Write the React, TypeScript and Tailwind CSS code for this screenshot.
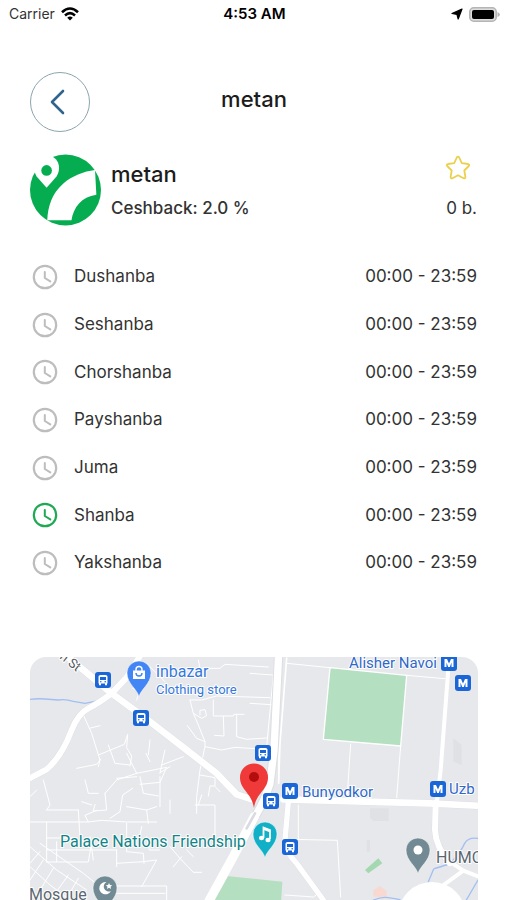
import type { ReactNode } from "react";

const days = [
  { name: "Dushanba", hours: "00:00 - 23:59", today: false },
  { name: "Seshanba", hours: "00:00 - 23:59", today: false },
  { name: "Chorshanba", hours: "00:00 - 23:59", today: false },
  { name: "Payshanba", hours: "00:00 - 23:59", today: false },
  { name: "Juma", hours: "00:00 - 23:59", today: false },
  { name: "Shanba", hours: "00:00 - 23:59", today: true },
  { name: "Yakshanba", hours: "00:00 - 23:59", today: false },
];

function StatusBar() {
  return (
    <div className="grid h-7 grid-cols-3 items-center pl-[9px] pr-[7px] text-black">
      <div className="flex items-center gap-[6px] text-sm">
        <span className="text-[#333]">Carrier</span>
        <svg width="18" height="14" viewBox="0 0 18 14" fill="none" stroke="#000" strokeWidth="2.6" aria-hidden="true">
          <path d="M1 5.2Q9-2.2 17 5.2" />
          <path d="M4 8.4Q9 4 14 8.4" />
          <path d="M9 13.6 6.2 10.7Q9 8.4 11.8 10.7Z" fill="#000" stroke="none" />
        </svg>
      </div>
      <div className="text-center text-[15px] font-semibold">4:53 AM</div>
      <div className="flex items-center justify-end gap-[6px]">
        <svg width="12" height="12" viewBox="0 0 12 12" aria-hidden="true">
          <path d="M11 1 7.2 11 6 6.500 1 5.500Z" fill="#000" stroke="#000" strokeWidth="1.200" strokeLinejoin="round" />
        </svg>
        <svg width="31" height="15" viewBox="0 0 31 15" aria-hidden="true">
          <rect x=".8" y=".8" width="26.4" height="13.4" rx="4" fill="#ddd" stroke="#b5b5b5" strokeWidth="1.6" />
          <rect x="3" y="3" width="22" height="9" rx="2" fill="#000" />
          <path d="M28.5 5q2.4 1 2.4 2.5t-2.4 2.5Z" fill="#b5b5b5" />
        </svg>
      </div>
    </div>
  );
}

function Logo() {
  return (
    <svg className="shrink-0" width="71" height="72" viewBox="0 0 214 216" role="img" aria-label="metan">
      <circle cx="107" cy="108" r="107" fill="#06ad50" />
      <path d="M52 199C54 156 67 118 99 90C126 66 162 52 196 48L200 122C155 128 131 160 125 199Z" fill="#fff" />
      <path d="M50 101 20 67C2 37 20 4 52 4C82 4 98 38 80 67Z" fill="#fff" />
      <circle cx="50" cy="49" r="16" fill="#06ad50" />
    </svg>
  );
}

function Clock({ active }: { active: boolean }) {
  return (
    <svg
      className={active ? "shrink-0 text-[#20a954]" : "shrink-0 text-[#bdbdbd]"}
      width="26"
      height="26"
      viewBox="0 0 26 26"
      fill="none"
      stroke="currentColor"
      strokeWidth="2.2"
      aria-hidden="true"
    >
      <circle cx="13" cy="13" r="11.200" />
      <path d="M12.800 8v6l5.500 3.400" strokeWidth="2" strokeLinecap="round" strokeLinejoin="round" />
    </svg>
  );
}

function Bus({ x, y }: { x: number; y: number }) {
  return (
    <g transform={`translate(${x - 8} ${y - 8})`}>
      <rect width="16" height="16" rx="3" fill="#1a66d6" />
      <path d="M3.500 4.500Q3.500 3 5.500 3h5Q12.500 3 12.500 4.500V11.500H12v1.700H10v-1.700H6v1.700H4v-1.700H3.500Z" fill="#fff" />
      <rect x="5" y="5" width="6" height="3" fill="#1a66d6" />
      <circle cx="5.800" cy="9.800" r=".8" fill="#1a66d6" />
      <circle cx="10.200" cy="9.800" r=".8" fill="#1a66d6" />
    </g>
  );
}

function Metro({ x, y }: { x: number; y: number }) {
  return (
    <g transform={`translate(${x - 8} ${y - 8})`}>
      <rect width="16" height="16" rx="3" fill="#1a66d6" />
      <path d="M3.500 12V4H6L8 8.500 10 4h2.500v8h-2V7.500L8.800 12H7.200L5.500 7.500V12Z" fill="#fff" />
    </g>
  );
}

function Pin({ x, y, color, children }: { x: number; y: number; color: string; children: ReactNode }) {
  return (
    <g transform={`translate(${x} ${y})`}>
      <path
        d="M0 24C-1.500 16-12 11-12 0A12 12 0 0 1 12 0C12 11 1.500 16 0 24Z"
        fill={color}
        stroke="#fff"
        strokeOpacity=".5"
        strokeWidth="1"
      />
      {children}
    </g>
  );
}

function MapView() {
  return (
    <svg
      className="block h-[243px] w-full rounded-t-2xl bg-[#e7e8eb]"
      viewBox="0 0 448 243"
      preserveAspectRatio="xMidYMid slice"
      role="img"
      aria-label="Map"
    >
      <g transform="scale(.33333) translate(-30 -21)" fill="none" strokeLinejoin="round" strokeLinecap="round">
        {/* parks and buildings */}
        <path d="M930 53 1160 76 1142 288 910 268Z" fill="#b5dfc1" stroke="#fff" strokeWidth="4" />
        <path d="M612 677 787 695 783 760H570Z" fill="#b5dfc1" />
        <path d="M1035 660 1075 625 1087 640 1045 670Z" fill="#a4d8b0" />
        <path d="M1050 475h56v38h-45l-11-10ZM1040 570h10v35h-10ZM1300 265l25 20v60l-25-10Z" fill="#dfe1e5" />
        <path d="M1060 740v-20l20-12 20 16v16Z" fill="#f8d9d2" />
        {/* side streets */}
        <g stroke="#fff" strokeWidth="3">
          <path d="M190 195 215 250 240 330 235 350M208 235l32-8M235 315l78-32 10-30-3 40 15 25-5 30M170 355l60-12 12-15M265 285l20 55 45 5" />
          <path d="M390 270l-5 45M378 310l12 25M435 300l-10 45M490 320l-65 25-5 25M450 350l-30 18M535 30l5 25h60l15-12 130 8M380 40l55 55M350 150l8-25-20-10" />
          <path d="M510 150h35l45-12 160 5M510 150l10 40 25 15 15-8-5-18-15 2v14M520 190l15 35 20 50-25-10-28-38M555 275v15l-15 70-10 80v50M555 290l50 10 40-8 75 5M580 150v48h30l2 60-28-2M610 198h30l2-5h30M650 195v65l30 8 60-4" />
          <path d="M320 310l30 60-60 20-35 40M350 370l90-18-20 45-60 6M290 385l60-5M360 380l10 50 45 8M420 380v90M255 430l5 50-40 3M220 483l5-20M185 455l30 10M195 390l10 40h30M540 375l45 8v25h-15l-5 30M585 410l15 15" />
          <path d="M30 516h175l40-5 75 5h90M80 516v120M80 480h95M80 480l10-15-20-75M30 440l20-20M175 480l5 84M110 575v60M80 564h90M80 600h210M80 636h125l10-60M205 516l-10-20 35-15M270 505l30-20 8-50 30-20M320 470l60 10 5 40M380 480l30-10" />
          <path d="M320 520v85l50 5 2 30M290 600v50M210 560l10 70M380 560l8 40h30M290 640l80-5 40-5-45 80M365 530l-10 50" />
          <path d="M30 590l80 70 90 60M60 580l130 90 50 40M30 650l60 55 60 45M30 640l30-35M30 690l40-60M60 720l40-65M95 745l50-70M140 745l35-60M290 708h150v42M290 730h145" />
          <path d="M525 465h60v90M545 435l-10 30M450 590l30 35 40 42h25M485 620l-25 30M500 600l20 20M450 450v40" />
          <path d="M690 70l68 5M690 160l65 4M765 24 740 290M800 40l130 13M1160 76l115 10M776 290v110M992 282l-10 150M1142 288l-12 155M835 465v103M815 568l137 3 10 170M795 735l85 6 15-10" />
        </g>
        {/* water */}
        <g stroke="#a2bff2" strokeWidth="4">
          <path d="M30 148q23-3 45-1l40 3q20-4 45 4l35 6 40-8" />
          <path d="M1374 565q-30-4-40 15-10 25-45 62-35 10-48 15l-16 38M1060 750q25-10 45-7t35 6M1374 690l-35 60" />
        </g>
        {/* main roads: a soft edge below, the white surface on top */}
        <g stroke="#dcdee2">
          <path strokeWidth="20" d="M365 10 320 82 275 130Q235 160 205 175T155 240Q125 320 80 358L20 390" />
          <path strokeWidth="22" d="M130 10 275 130 390 215 500 300 590 370 650 433 695 448" />
          <path strokeWidth="28" d="M776 10 762 300 750 400Q735 450 705 500L640 620 560 765" />
          <path strokeWidth="22" d="M790 448 1230 460 1390 468" />
          <path strokeWidth="20" d="M1247 460 1245 540Q1247 590 1290 640" />
          <path strokeWidth="18" d="M805 455 795 570Q795 605 830 640L910 750" />
        </g>
        <g stroke="#fff">
          <path strokeWidth="18" d="M365 10 320 82 275 130Q235 160 205 175T155 240Q125 320 80 358L20 390" />
          <path strokeWidth="20" d="M130 10 275 130 390 215 500 300 590 370 650 433 695 448" />
          <path strokeWidth="22" d="M776 10 762 300 750 400Q735 450 705 500" />
          <path strokeWidth="28" d="M703 500 640 620 560 765" />
          <path strokeWidth="5" d="M800 24 780 280 776 400" />
          <path strokeWidth="20" d="M790 448 1230 460 1390 468" />
          <path strokeWidth="12" d="M1287 30 1262 360 1250 460" />
          <path strokeWidth="18" d="M1247 460 1245 540Q1247 590 1290 640" />
          <path strokeWidth="12" d="M1275 625 1330 662 1390 685M1330 662 1250 720" />
          <path strokeWidth="16" d="M805 455 795 570Q795 605 830 640L910 750" />
        </g>
        <path d="M705 490 680 535" stroke="#d9dbe0" strokeWidth="8" />
      </g>

      <circle cx="402" cy="259" r="34" fill="#fff" />

      <Bus x={73} y={23} />
      <Bus x={111} y={61} />
      <Bus x={233} y={96} />
      <Bus x={241} y={144} />
      <Bus x={260} y={190} />
      <Metro x={419} y={6} />
      <Metro x={433} y={26} />
      <Metro x={260} y={134} />
      <Metro x={408} y={132} />

      <Pin x={109} y={16} color="#4285f4">
        <path d="M-6-2.500H6V6H-6Z" fill="#fff" />
        <path d="M-3-2v-1.500a3 3 0 0 1 6 0V-2" fill="none" stroke="#fff" strokeWidth="1.400" />
        <path d="M-3 0a3 3 0 0 0 6 0" fill="none" stroke="#4285f4" strokeWidth="1.400" />
      </Pin>
      <Pin x={235} y={177} color="#12b0c6">
        <path d="M-1.500 4V-6.500L5-4V5M-1.500-5 5-2.500" fill="none" stroke="#fff" strokeWidth="1.800" />
        <ellipse cx="-3.500" cy="4" rx="2.600" ry="2.200" fill="#fff" />
        <ellipse cx="3" cy="6" rx="2.600" ry="2.200" fill="#fff" />
      </Pin>
      <Pin x={388} y={193} color="#728a94">
        <circle r="4.500" fill="#fff" />
      </Pin>
      <Pin x={75} y={231} color="#728a94">
        <path d="M1.500-6A6.200 6.200 0 1 0 6 3 5 5 0 0 1 1.500-6Z" fill="#fff" />
        <path d="m4-5 1 2 2.200.2L5.600-1.300 6 1 4-.2 2 1l.5-2.200L.8-2.800 3-3Z" fill="#fff" />
      </Pin>
      <path d="M224 151C222 136 210 133 210 120.500A14 14 0 0 1 238 120.500C238 133 226 136 224 151Z" fill="#f03a3a" />
      <circle cx="224" cy="120" r="5" fill="#b30d0d" />

      <g
        className="font-['Roboto','Liberation_Sans',sans-serif] text-base"
        stroke="#fff"
        strokeWidth="2"
        strokeLinejoin="round"
        paintOrder="stroke"
      >
        <text x="126" y="20" fill="#3478dc">inbazar</text>
        <text x="126" y="37" className="text-[13px]" fill="#3478dc">Clothing store</text>
        <text x="319" y="11" className="text-[15px]" fill="#3068c8">Alisher Navoi</text>
        <text x="272" y="140" className="text-[15px]" fill="#3068c8">Bunyodkor</text>
        <text x="419" y="137" className="text-[15px]" fill="#3068c8">Uzb</text>
        <text x="30" y="190" fill="#128488">Palace Nations Friendship</text>
        <text x="406" y="206" fill="#5b6770">HUMO</text>
        <text x="-1" y="243" fill="#5b6770">Mosque</text>
        <text transform="translate(29 1) rotate(38)" className="text-[13px]" fill="#55585c">
          n St
        </text>
      </g>
    </svg>
  );
}

export default function App() {
  return (
    <main className="flex min-h-screen flex-col overflow-hidden bg-white font-['Inter','Liberation_Sans',sans-serif] text-[#333]">
      <StatusBar />
      <header className="mt-[44px] grid grid-cols-[60px_1fr_60px] items-center pl-[30px] pr-[29px]">
        <button
          type="button"
          aria-label="Back"
          className="flex size-[60px] items-center justify-center rounded-full border border-[#8ba5af] pr-1"
        >
          <svg width="16" height="26" viewBox="0 0 16 26" fill="none" stroke="#2f648f" strokeWidth="2.600" aria-hidden="true">
            <path d="M13 2 2 13l11 11" strokeLinecap="round" strokeLinejoin="round" />
          </svg>
        </button>
        <h1 className="pb-[6px] text-center text-[22px] leading-7 font-medium text-[#1c1c1c]">metan</h1>
      </header>

      <section className="mt-[22px] flex items-center gap-[10px] px-[30px]">
        <Logo />
        <div className="flex flex-1 flex-col gap-1">
          <h2 className="text-[22px] leading-8 font-medium text-[#1c1c1c]">metan</h2>
          <p className="text-[17px] leading-7 font-medium">Ceshback: 2.0 %</p>
        </div>
        <div className="flex flex-col items-end gap-4">
          <button type="button" aria-label="Add to favourites" className="flex h-5 items-center pr-[6px]">
            <svg width="26" height="26" viewBox="0 0 26 26" fill="none" stroke="#ecd04c" strokeWidth="1.800" aria-hidden="true">
              <path
                d="M11.800 2.500Q13 .8 14.200 2.500L16.800 8.200 23 9Q25 9.500 23.800 11L19.300 15.500 20.400 21.800Q20.400 24 18.500 23.200L13 20.300 7.500 23.200Q5.600 24 5.600 21.800L6.700 15.500 2.200 11Q1 9.500 3 9L9.200 8.200Z"
                strokeLinejoin="round"
              />
            </svg>
          </button>
          <p className="text-[17px] leading-7">0 b.</p>
        </div>
      </section>

      <ul className="mt-[27px] grid h-[334px] grid-rows-7 pl-[32px] pr-[30px] text-[17px]">
        {days.map((day) => (
          <li key={day.name} className="flex items-center gap-4">
            <Clock active={day.today} />
            <span className="flex-1">{day.name}</span>
            <span>{day.hours}</span>
          </li>
        ))}
      </ul>

      <section className="mt-[70px] pl-[30px] pr-[29px]">
        <MapView />
      </section>
    </main>
  );
}
